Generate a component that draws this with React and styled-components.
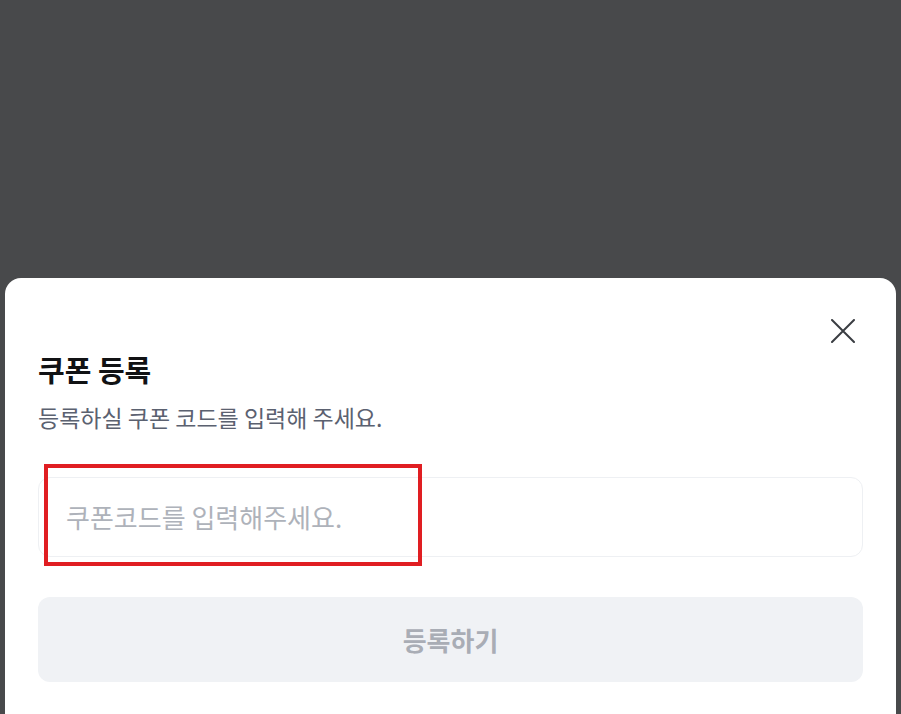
import React from "react";
import styled, { createGlobalStyle } from "styled-components";

const Global = createGlobalStyle`
  html, body { margin: 0; padding: 0; height: 100%; }
  body {
    background: #48494b;
    font-family: "Noto Sans CJK KR", "Noto Sans", sans-serif;
    overflow: hidden;
  }
`;

const Overlay = styled.div`
  min-height: 714px;
  box-sizing: border-box;
  padding: 278px 5px 0;
  display: flex;
  flex-direction: column;
`;

const Sheet = styled.section`
  flex: 1;
  background: #ffffff;
  border-radius: 16px 16px 0 0;
  padding: 33px 33px 40px;
  display: flex;
  flex-direction: column;
`;

const Header = styled.div`
  display: flex;
  justify-content: flex-end;
`;

const CloseButton = styled.button`
  width: 40px;
  height: 40px;
  border: none;
  background: transparent;
  padding: 0;
  display: flex;
  align-items: center;
  justify-content: center;
  color: #3a3d42;
  cursor: pointer;
`;

const Title = styled.h2`
  margin: 0;
  font-size: 29px;
  font-weight: 700;
  color: #111214;
  line-height: 1.3;
`;

const Subtitle = styled.p`
  margin: 12px 0 0;
  font-size: 23px;
  font-weight: 400;
  color: #5b6170;
  line-height: 1.4;
`;

const Field = styled.div`
  position: relative;
  margin-top: 44px;
`;

const Input = styled.input`
  width: 100%;
  box-sizing: border-box;
  height: 80px;
  border: 1px solid #eef0f3;
  border-radius: 12px;
  padding: 0 27px;
  font-family: inherit;
  font-size: 26px;
  color: #111214;
  background: #fff;
  outline: none;
  &::placeholder {
    color: #aeb2ba;
  }
`;

const Highlight = styled.div`
  position: absolute;
  left: 6px;
  top: -13px;
  width: 378px;
  height: 102px;
  box-sizing: border-box;
  border: 4px solid #e01e22;
  pointer-events: none;
`;

const Submit = styled.button`
  margin-top: 40px;
  height: 85px;
  border: none;
  border-radius: 12px;
  background: #f0f2f5;
  color: #a9adb5;
  font-family: inherit;
  font-size: 26px;
  font-weight: 700;
`;

export default function App() {
  return (
    <>
      <Global />
      <Overlay>
        <Sheet>
          <Header>
            <CloseButton aria-label="닫기">
              <svg width="24" height="24" viewBox="0 0 24 24" fill="none" stroke="currentColor" strokeWidth="2" strokeLinecap="round">
                <path d="M1 1L23 23M23 1L1 23" />
              </svg>
            </CloseButton>
          </Header>
          <Title>쿠폰 등록</Title>
          <Subtitle>등록하실 쿠폰 코드를 입력해 주세요.</Subtitle>
          <Field>
            <Input placeholder="쿠폰코드를 입력해주세요." />
            <Highlight />
          </Field>
          <Submit disabled>등록하기</Submit>
        </Sheet>
      </Overlay>
    </>
  );
}
